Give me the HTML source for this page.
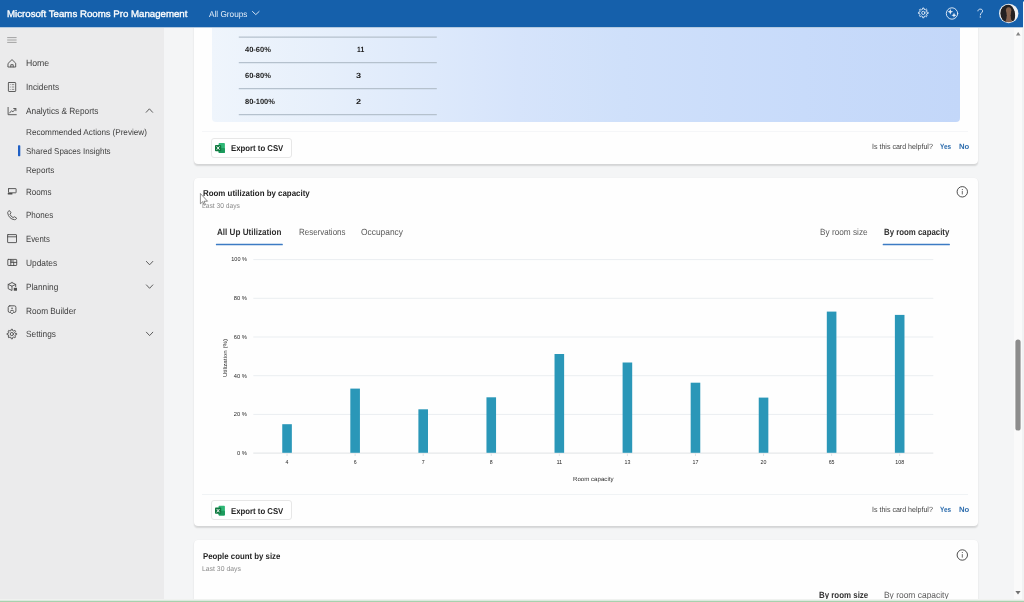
<!DOCTYPE html>
<html>
<head>
<meta charset="utf-8">
<title>Microsoft Teams Rooms Pro Management</title>
<style>
*{box-sizing:border-box;margin:0;padding:0}
html,body{width:1024px;height:602px;overflow:hidden;background:#f4f5f6;font-family:"Liberation Sans",sans-serif;color:#242424}
.abs{position:absolute}
svg{position:absolute;overflow:visible}
.t{position:absolute;white-space:nowrap;line-height:1;transform-origin:0 0;text-rendering:geometricPrecision}
#txt{position:absolute;left:0;top:0;width:1024px;height:602px;z-index:11;will-change:transform;pointer-events:none}
#hdr{z-index:10;position:absolute;left:0;top:0;width:1024px;height:27px;background:#1560ab}
#side{position:absolute;left:0;top:27px;width:164px;height:575px;background:#ebebec}
#main{position:absolute;left:164px;top:27px;width:850px;height:575px;background:#f4f5f6}
#sb{position:absolute;left:1014px;top:27px;width:8px;height:575px;background:#fafafa}
.card{position:absolute;background:#fefefe;border-radius:4px;box-shadow:0 1.2px 1.6px rgba(0,0,0,.13),0 0 1px rgba(0,0,0,.05)}
.btn{position:absolute;background:#fff;border:1px solid #e7e7e7;border-radius:3px}
.ic{fill:none;stroke:#4d4d4d;stroke-width:.9;stroke-linecap:round;stroke-linejoin:round}
.icw{fill:none;stroke:#e9f1fa;stroke-width:.9;stroke-linecap:round;stroke-linejoin:round}
.ct{font-family:"Liberation Sans",sans-serif;font-size:6px;fill:#2a2a2a}
</style>
</head>
<body>
<div id="hdr"></div>
<div class="abs" style="left:0;top:27px;width:1023px;height:1px;background:#b4cae0;z-index:10"></div>
<div id="side"></div>
<div id="main"></div>
<div id="sb"></div>
<div class="abs" style="left:1022px;top:27px;width:2px;height:575px;background:#f1f2f3"></div>
<div class="card" style="left:193.5px;top:10px;width:784.5px;height:153.5px"></div>
<div class="abs" style="left:212px;top:20px;width:748px;height:102.4px;border-radius:4px;background:linear-gradient(90deg,#eff5fc 0%,#e6effb 16%,#dde9fb 30%,#d6e4fb 41%,#cfe0fa 55%,#c8dbfa 79%,#c3d7f9 100%)"></div>
<div class="btn" style="left:210.5px;top:137.5px;width:81px;height:20.3px"></div>
<div class="abs" style="left:202px;top:131px;width:766px;height:1px;background:#f5f6f8"></div>
<div class="card" style="left:193.5px;top:177.5px;width:784.5px;height:348.8px"></div>
<div class="abs" style="left:202px;top:494px;width:766px;height:1px;background:#f0f3f5"></div>
<div class="btn" style="left:210.5px;top:500.2px;width:81px;height:20.3px"></div>
<div class="card" style="left:193.5px;top:540.3px;width:784.5px;height:61.7px;border-radius:4px 4px 0 0"></div>
<svg style="left:0;top:0;z-index:12" width="1024" height="602" viewBox="0 0 1024 602">
<line x1="238.8" x2="436.8" y1="37.2" y2="37.2" stroke="#b5c1cd" stroke-width="1.3"/>
<line x1="238.8" x2="436.8" y1="62.7" y2="62.7" stroke="#b5c1cd" stroke-width="1.3"/>
<line x1="238.8" x2="436.8" y1="88.7" y2="88.7" stroke="#b5c1cd" stroke-width="1.3"/>
<line x1="238.8" x2="436.8" y1="114.6" y2="114.6" stroke="#b5c1cd" stroke-width="1.3"/>
<rect x="215.9" y="243.7" width="66.9" height="1.45" rx=".5" fill="#3c7bc4"/><rect x="882.7" y="243.7" width="67.2" height="1.45" rx=".5" fill="#3c7bc4"/>
<line x1="253.3" x2="933.3" y1="259.6" y2="259.6" stroke="#eaeef1" stroke-width="1"/>
<line x1="253.3" x2="933.3" y1="298.3" y2="298.3" stroke="#eaeef1" stroke-width="1"/>
<line x1="253.3" x2="933.3" y1="337.0" y2="337.0" stroke="#eaeef1" stroke-width="1"/>
<line x1="253.3" x2="933.3" y1="375.7" y2="375.7" stroke="#eaeef1" stroke-width="1"/>
<line x1="253.3" x2="933.3" y1="414.4" y2="414.4" stroke="#eaeef1" stroke-width="1"/>
<line x1="253.3" x2="933.3" y1="453.1" y2="453.1" stroke="#e0e3e5" stroke-width="1"/>
<rect x="282.25" y="424.2" width="9.6" height="28.6" fill="#2a97b8"/>
<line x1="287.05" x2="287.05" y1="453.5" y2="456" stroke="#d8dcdf" stroke-width=".8"/>
<text class="ct" x="285.60" y="463.6" textLength="2.9" lengthAdjust="spacingAndGlyphs">4</text>
<rect x="350.32" y="388.6" width="9.6" height="64.2" fill="#2a97b8"/>
<line x1="355.12" x2="355.12" y1="453.5" y2="456" stroke="#d8dcdf" stroke-width=".8"/>
<text class="ct" x="353.67" y="463.6" textLength="2.9" lengthAdjust="spacingAndGlyphs">6</text>
<rect x="418.39" y="409.3" width="9.6" height="43.5" fill="#2a97b8"/>
<line x1="423.19" x2="423.19" y1="453.5" y2="456" stroke="#d8dcdf" stroke-width=".8"/>
<text class="ct" x="421.74" y="463.6" textLength="2.9" lengthAdjust="spacingAndGlyphs">7</text>
<rect x="486.46" y="397.3" width="9.6" height="55.5" fill="#2a97b8"/>
<line x1="491.26" x2="491.26" y1="453.5" y2="456" stroke="#d8dcdf" stroke-width=".8"/>
<text class="ct" x="489.81" y="463.6" textLength="2.9" lengthAdjust="spacingAndGlyphs">8</text>
<rect x="554.53" y="354.0" width="9.6" height="98.8" fill="#2a97b8"/>
<line x1="559.33" x2="559.33" y1="453.5" y2="456" stroke="#d8dcdf" stroke-width=".8"/>
<text class="ct" x="556.38" y="463.6" textLength="5.9" lengthAdjust="spacingAndGlyphs">11</text>
<rect x="622.60" y="362.5" width="9.6" height="90.3" fill="#2a97b8"/>
<line x1="627.40" x2="627.40" y1="453.5" y2="456" stroke="#d8dcdf" stroke-width=".8"/>
<text class="ct" x="624.45" y="463.6" textLength="5.9" lengthAdjust="spacingAndGlyphs">13</text>
<rect x="690.67" y="382.7" width="9.6" height="70.1" fill="#2a97b8"/>
<line x1="695.47" x2="695.47" y1="453.5" y2="456" stroke="#d8dcdf" stroke-width=".8"/>
<text class="ct" x="692.52" y="463.6" textLength="5.9" lengthAdjust="spacingAndGlyphs">17</text>
<rect x="758.74" y="397.6" width="9.6" height="55.2" fill="#2a97b8"/>
<line x1="763.54" x2="763.54" y1="453.5" y2="456" stroke="#d8dcdf" stroke-width=".8"/>
<text class="ct" x="760.59" y="463.6" textLength="5.9" lengthAdjust="spacingAndGlyphs">20</text>
<rect x="826.81" y="311.6" width="9.6" height="141.2" fill="#2a97b8"/>
<line x1="831.61" x2="831.61" y1="453.5" y2="456" stroke="#d8dcdf" stroke-width=".8"/>
<text class="ct" x="828.66" y="463.6" textLength="5.9" lengthAdjust="spacingAndGlyphs">65</text>
<rect x="894.88" y="314.9" width="9.6" height="137.9" fill="#2a97b8"/>
<line x1="899.68" x2="899.68" y1="453.5" y2="456" stroke="#d8dcdf" stroke-width=".8"/>
<text class="ct" x="895.23" y="463.6" textLength="8.9" lengthAdjust="spacingAndGlyphs">108</text>
<text class="ct" x="231.30" y="261.4" textLength="15.6" lengthAdjust="spacingAndGlyphs">100 %</text>
<text class="ct" x="233.80" y="300.1" textLength="13.1" lengthAdjust="spacingAndGlyphs">80 %</text>
<text class="ct" x="233.80" y="338.8" textLength="13.1" lengthAdjust="spacingAndGlyphs">60 %</text>
<text class="ct" x="233.80" y="377.5" textLength="13.1" lengthAdjust="spacingAndGlyphs">40 %</text>
<text class="ct" x="233.80" y="416.2" textLength="13.1" lengthAdjust="spacingAndGlyphs">20 %</text>
<text class="ct" x="236.90" y="454.9" textLength="10.0" lengthAdjust="spacingAndGlyphs">0 %</text>
<text class="ct" transform="translate(227.2 377.1) rotate(-90)" textLength="38.1" lengthAdjust="spacingAndGlyphs">Utilization (%)</text>
<path class="icw" d="M926.92 12.14 L928.16 12.26 L928.16 13.54 L926.92 13.66 L926.40 14.93 L927.19 15.88 L926.28 16.79 L925.33 16.00 L924.06 16.52 L923.94 17.76 L922.66 17.76 L922.54 16.52 L921.27 16.00 L920.32 16.79 L919.41 15.88 L920.20 14.93 L919.68 13.66 L918.44 13.54 L918.44 12.26 L919.68 12.14 L920.20 10.87 L919.41 9.92 L920.32 9.01 L921.27 9.80 L922.54 9.28 L922.66 8.04 L923.94 8.04 L924.06 9.28 L925.33 9.80 L926.28 9.01 L927.19 9.92 L926.40 10.87Z"/><circle class="icw" cx="923.3" cy="12.9" r="1.6"/>
<circle class="icw" cx="952" cy="13.5" r="5.7" stroke-width="1"/>
<path fill="#e9f1fa" d="M950.3 8.9 L951.1 11 L953.2 11.8 L951.1 12.6 L950.3 14.7 L949.5 12.6 L947.4 11.8 L949.5 11 Z"/>
<path fill="#e9f1fa" d="M954 12.6 L954.7 14.5 L956.6 15.2 L954.7 15.9 L954 17.8 L953.3 15.9 L951.4 15.2 L953.3 14.5 Z"/>
<path class="icw" stroke-width="1" d="M977.9 10.9 C977.9 8.4 982.6 8.4 982.6 11 C982.6 12.8 980.3 12.9 980.3 14.9"/><circle cx="980.3" cy="17" r=".65" fill="#e9f1fa"/>
<defs><clipPath id="av"><circle cx="1008.7" cy="13.45" r="8.9"/></clipPath></defs>
<circle cx="1008.7" cy="13.45" r="9.7" fill="#e6ebf0"/>
<g clip-path="url(#av)"><rect x="998" y="3" width="22" height="22" fill="#f1f1f1"/><ellipse cx="1007.4" cy="13.2" rx="7" ry="9" fill="#232021"/><path d="M1005.6 16 L1011 16 L1012.4 24 L1004.4 24Z" fill="#84614e"/><ellipse cx="1008.6" cy="12" rx="3" ry="4.7" fill="#86634f"/><ellipse cx="1012.9" cy="15.5" rx="2.2" ry="6" fill="#232021"/><ellipse cx="1004.3" cy="15.5" rx="2.4" ry="6.5" fill="#232021"/></g>
<rect x="1023" y="1.5" width="1" height="26" fill="#f3f6fa"/>
<path class="icw" stroke-width="1" d="M252.5 11.5 L255.8 14.6 L259.1 11.5"/>
<path class="ic" d="M146.2 112.3 L149.4 108.8 L152.6 112.3"/>
<path class="ic" d="M146.4 261.4 L149.6 264.79999999999995 L152.8 261.4"/>
<path class="ic" d="M146.4 284.9 L149.6 288.29999999999995 L152.8 284.9"/>
<path class="ic" d="M146.4 332.2 L149.6 335.59999999999997 L152.8 332.2"/>
<line x1="7.2" x2="16.6" y1="37.6" y2="37.6" stroke="#9a9a9a" stroke-width=".9"/>
<line x1="7.2" x2="16.6" y1="40.0" y2="40.0" stroke="#9a9a9a" stroke-width=".9"/>
<line x1="7.2" x2="16.6" y1="42.4" y2="42.4" stroke="#9a9a9a" stroke-width=".9"/>
<path class="ic" d="M8.3 63.2 L12 59.6 L15.7 63.2 V67 H8.3 Z"/><path class="ic" stroke-width=".8" d="M10.8 66.9 V64.7 H13.2 V66.9"/>
<rect class="ic" x="8.4" y="82.5" width="7.3" height="9" rx=".6"/>
<circle cx="10.2" cy="84.6" r=".45" fill="#4d4d4d"/><line x1="11.8" x2="14.2" y1="84.6" y2="84.6" stroke="#4d4d4d" stroke-width=".6"/>
<circle cx="10.2" cy="87.0" r=".45" fill="#4d4d4d"/><line x1="11.8" x2="14.2" y1="87.0" y2="87.0" stroke="#4d4d4d" stroke-width=".6"/>
<circle cx="10.2" cy="89.4" r=".45" fill="#4d4d4d"/><line x1="11.8" x2="14.2" y1="89.4" y2="89.4" stroke="#4d4d4d" stroke-width=".6"/>
<path class="ic" d="M8.1 107.4 V114.7 H16.3"/><path class="ic" d="M9.6 113 L11.6 110.7 L12.9 111.9 L15.7 108.7"/><path class="ic" d="M13.7 108.5 H15.9 V110.7"/>
<rect class="ic" x="8.5" y="188.6" width="7.6" height="4.2" rx=".3"/><rect x="7.7" y="193.1" width="4.8" height="1.3" rx=".3" fill="#4d4d4d"/>
<path class="ic" d="M9.3 210.8 C8.2 211 7.6 211.8 7.7 212.9 C8.1 216.5 10.9 219.4 14.5 219.7 C15.6 219.8 16.4 219.1 16.6 218.1 L14.3 216.7 L13.1 217.6 C11.6 216.9 10.5 215.7 9.9 214.3 L10.8 213.1 Z"/>
<rect class="ic" x="7.6" y="234.6" width="8.9" height="8" rx=".4"/><line class="ic" x1="7.6" x2="16.5" y1="236.8" y2="236.8"/>
<rect class="ic" x="7.8" y="259.4" width="8.9" height="6.1" rx=".5"/><path class="ic" stroke-width=".8" d="M10.8 259.4 V265.5 M10.8 262.4 H16.7 M13.7 262.4 V265.5 M10.8 261 H13.7"/>
<path class="ic" d="M12 282.6 L15.7 284.4 V286.6 M12 282.6 L8.2 284.4 V288.7 L12 290.5 V286.2 L8.2 284.4 M12 286.2 L15.7 284.4"/><rect x="13.8" y="287.8" width="3.2" height="2.9" fill="#4d4d4d"/>
<path class="ic" d="M9.8 305.8 H14.3 Q15.9 305.8 15.9 307.4 V310.9 Q15.9 312.5 14.3 312.5 H13.3 L12.05 313.9 L10.8 312.5 H9.8 Q8.2 312.5 8.2 310.9 V307.4 Q8.2 305.8 9.8 305.8Z"/><circle cx="12.05" cy="308.3" r=".8" fill="#4d4d4d"/><path class="ic" d="M10.2 311.1 Q12.05 308.8 13.9 311.1"/>
<path class="ic" d="M15.37 333.31 L16.61 333.42 L16.61 334.68 L15.37 334.79 L14.86 336.02 L15.66 336.97 L14.77 337.86 L13.82 337.06 L12.59 337.57 L12.48 338.81 L11.22 338.81 L11.11 337.57 L9.88 337.06 L8.93 337.86 L8.04 336.97 L8.84 336.02 L8.33 334.79 L7.09 334.68 L7.09 333.42 L8.33 333.31 L8.84 332.08 L8.04 331.13 L8.93 330.24 L9.88 331.04 L11.11 330.53 L11.22 329.29 L12.48 329.29 L12.59 330.53 L13.82 331.04 L14.77 330.24 L15.66 331.13 L14.86 332.08Z"/><circle class="ic" cx="11.85" cy="334.05" r="1.6"/>
<rect x="18" y="145.3" width="2.3" height="10.9" rx=".6" fill="#1f5fc5"/>
<circle cx="962.3" cy="191.8" r="5.2" fill="none" stroke="#3a3a3a" stroke-width=".9"/><line x1="962.3" x2="962.3" y1="190.9" y2="194.4" stroke="#3a3a3a" stroke-width=".75"/><circle cx="962.3" cy="189.4" r=".5" fill="#3a3a3a"/>
<circle cx="962.3" cy="555.0" r="5.2" fill="none" stroke="#3a3a3a" stroke-width=".9"/><line x1="962.3" x2="962.3" y1="554.1" y2="557.6" stroke="#3a3a3a" stroke-width=".75"/><circle cx="962.3" cy="552.6" r=".5" fill="#3a3a3a"/>
<rect x="218.6" y="143.1" width="6.3" height="9.9" rx=".8" fill="#2fb776"/><rect x="218.6" y="148.1" width="6.3" height="4.9" rx=".8" fill="#1c9a5c"/><rect x="215" y="144.9" width="6.2" height="6.3" rx=".8" fill="#117a41"/><path d="M216.7 146.4 L219.5 149.7 M219.5 146.4 L216.7 149.7" stroke="#fff" stroke-width=".9"/>
<rect x="218.6" y="505.7" width="6.3" height="9.9" rx=".8" fill="#2fb776"/><rect x="218.6" y="510.7" width="6.3" height="4.9" rx=".8" fill="#1c9a5c"/><rect x="215" y="507.5" width="6.2" height="6.3" rx=".8" fill="#117a41"/><path d="M216.7 509.0 L219.5 512.3 M219.5 509.0 L216.7 512.3" stroke="#fff" stroke-width=".9"/>
<path d="M200.4 193.5 L200.4 203.8 L202.7 201.7 L204.3 205.2 L205.5 204.7 L204 201.3 L207.5 201.2 Z" fill="#fff" stroke="#333" stroke-width=".55" stroke-linejoin="round"/>
<path d="M1015.9 35.4 L1018.2 32.1 L1020.5 35.4Z" fill="#858585"/>
<path d="M1015.4 591.1 L1018 594.6 L1020.6 591.1Z" fill="#727272"/>
<rect x="1015.4" y="339.5" width="5.2" height="91" rx="2.6" fill="#8c8c8c"/>
</svg>
<div id="txt">
<span class="t" style="left:7.22px;top:10.00px;font-size:9.5px;-webkit-text-stroke:.32px #ffffff;color:#ffffff;transform:scaleX(1.0180);z-index:11">Microsoft Teams Rooms Pro Management</span>
<span class="t" style="left:208.50px;top:10.00px;font-size:8.5px;color:#e3edf8;transform:scaleX(0.9680);z-index:11">All Groups</span>
<span class="t" style="left:25.99px;top:58.75px;font-size:9px;color:#404040;transform:scaleX(0.9655)">Home</span>
<span class="t" style="left:26.40px;top:82.75px;font-size:9px;color:#404040;transform:scaleX(0.9179)">Incidents</span>
<span class="t" style="left:25.80px;top:106.75px;font-size:9px;color:#404040;transform:scaleX(0.9216)">Analytics &amp; Reports</span>
<span class="t" style="left:26.11px;top:128.00px;font-size:8.5px;color:#404040;transform:scaleX(0.9630)">Recommended Actions (Preview)</span>
<span class="t" style="left:25.82px;top:147.00px;font-size:8.5px;color:#404040;transform:scaleX(0.9425)">Shared Spaces Insights</span>
<span class="t" style="left:26.01px;top:166.00px;font-size:8.5px;color:#404040;transform:scaleX(0.9547)">Reports</span>
<span class="t" style="left:26.02px;top:187.75px;font-size:9px;color:#404040;transform:scaleX(0.8933)">Rooms</span>
<span class="t" style="left:26.02px;top:210.75px;font-size:9px;color:#404040;transform:scaleX(0.8932)">Phones</span>
<span class="t" style="left:26.03px;top:234.75px;font-size:9px;color:#404040;transform:scaleX(0.8676)">Events</span>
<span class="t" style="left:26.01px;top:258.75px;font-size:9px;color:#404040;transform:scaleX(0.9300)">Updates</span>
<span class="t" style="left:26.00px;top:282.75px;font-size:9px;color:#404040;transform:scaleX(0.9212)">Planning</span>
<span class="t" style="left:26.00px;top:306.75px;font-size:9px;color:#404040;transform:scaleX(0.9182)">Room Builder</span>
<span class="t" style="left:25.80px;top:329.75px;font-size:9px;color:#404040;transform:scaleX(0.9213)">Settings</span>
<span class="t" style="left:245.46px;top:46.00px;font-size:7.5px;font-weight:bold;color:#1c1c1c;transform:scaleX(1.0023)">40-60%</span>
<span class="t" style="left:245.46px;top:72.00px;font-size:7.5px;font-weight:bold;color:#1c1c1c;transform:scaleX(1.0023)">60-80%</span>
<span class="t" style="left:245.46px;top:98.00px;font-size:7.5px;font-weight:bold;color:#1c1c1c;transform:scaleX(0.9962)">80-100%</span>
<span class="t" style="left:356.79px;top:46.00px;font-size:7.5px;font-weight:bold;color:#1c1c1c;transform:scaleX(0.9083)">11</span>
<span class="t" style="left:356.31px;top:72.00px;font-size:7.5px;font-weight:bold;color:#1c1c1c;transform:scaleX(1.2162)">3</span>
<span class="t" style="left:356.31px;top:98.00px;font-size:7.5px;font-weight:bold;color:#1c1c1c;transform:scaleX(1.2162)">2</span>
<span class="t" style="left:231.03px;top:144.00px;font-size:8.5px;font-weight:bold;color:#242424;transform:scaleX(0.9154)">Export to CSV</span>
<span class="t" style="left:872.18px;top:143.00px;font-size:7.5px;color:#454545;transform:scaleX(0.9410)">Is this card helpful?</span>
<span class="t" style="left:940.31px;top:143.00px;font-size:7.5px;font-weight:bold;color:#2f6eae;transform:scaleX(0.8587)">Yes</span>
<span class="t" style="left:958.54px;top:143.00px;font-size:7.5px;font-weight:bold;color:#2f6eae;transform:scaleX(1.0310)">No</span>
<span class="t" style="left:202.73px;top:189.00px;font-size:8.5px;font-weight:bold;color:#1f1f1f;transform:scaleX(0.9298)">Room utilization by capacity</span>
<span class="t" style="left:202.40px;top:203.25px;font-size:7px;color:#8a8a8a;transform:scaleX(0.9560)">Last 30 days</span>
<span class="t" style="left:217.11px;top:227.75px;font-size:9px;font-weight:bold;color:#303030;transform:scaleX(0.9003)">All Up Utilization</span>
<span class="t" style="left:298.52px;top:227.75px;font-size:9px;color:#5a5a5a;transform:scaleX(0.8847)">Reservations</span>
<span class="t" style="left:361.30px;top:227.75px;font-size:9px;color:#5a5a5a;transform:scaleX(0.9322)">Occupancy</span>
<span class="t" style="left:819.61px;top:227.75px;font-size:9px;color:#5a5a5a;transform:scaleX(0.9146)">By room size</span>
<span class="t" style="left:884.03px;top:227.75px;font-size:9px;font-weight:bold;color:#303030;transform:scaleX(0.8699)">By room capacity</span>
<span class="t" style="left:573.44px;top:477.25px;font-size:6px;color:#303030;transform:scaleX(1.0217)">Room capacity</span>
<span class="t" style="left:231.03px;top:507.00px;font-size:8.5px;font-weight:bold;color:#242424;transform:scaleX(0.9154)">Export to CSV</span>
<span class="t" style="left:872.18px;top:506.00px;font-size:7.5px;color:#454545;transform:scaleX(0.9410)">Is this card helpful?</span>
<span class="t" style="left:940.31px;top:506.00px;font-size:7.5px;font-weight:bold;color:#2f6eae;transform:scaleX(0.8587)">Yes</span>
<span class="t" style="left:958.54px;top:506.00px;font-size:7.5px;font-weight:bold;color:#2f6eae;transform:scaleX(1.0310)">No</span>
<span class="t" style="left:202.53px;top:552.00px;font-size:8.5px;font-weight:bold;color:#1f1f1f;transform:scaleX(0.9196)">People count by size</span>
<span class="t" style="left:202.29px;top:566.25px;font-size:7px;color:#8a8a8a;transform:scaleX(0.9788)">Last 30 days</span>
<span class="t" style="left:819.23px;top:590.75px;font-size:9px;font-weight:bold;color:#303030;transform:scaleX(0.8777)">By room size</span>
<span class="t" style="left:884.40px;top:590.75px;font-size:9px;color:#5a5a5a;transform:scaleX(0.9369)">By room capacity</span>
</div>
<div class="abs noc" style="left:0;top:599px;width:1024px;height:1px;background:#f0f2f0;z-index:20"></div>
<div class="abs noc" style="left:0;top:600px;width:1024px;height:1px;background:#dde9df;z-index:20"></div><div class="abs noc" style="left:0;top:601px;width:1024px;height:1px;background:#a6d1ad;z-index:20"></div>
</body>
</html>
